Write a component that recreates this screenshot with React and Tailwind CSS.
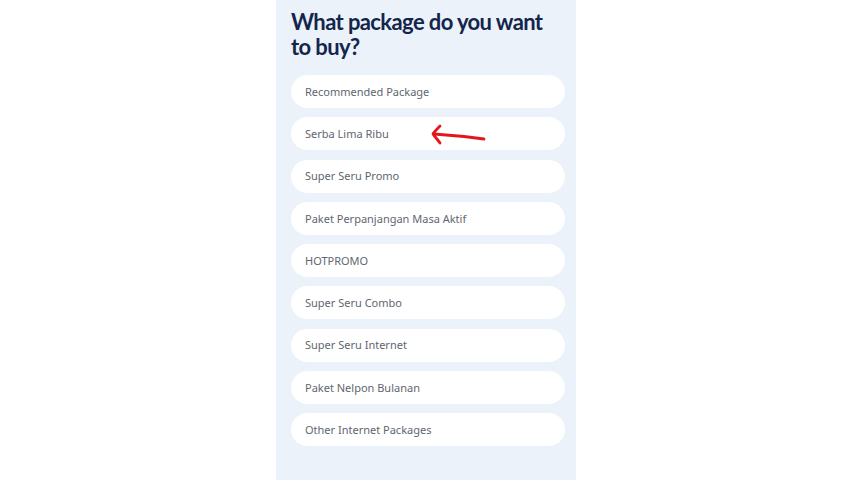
export default function App() {
  const items = [
    "Recommended Package",
    "Serba Lima Ribu",
    "Super Seru Promo",
    "Paket Perpanjangan Masa Aktif",
    "HOTPROMO",
    "Super Seru Combo",
    "Super Seru Internet",
    "Paket Nelpon Bulanan",
    "Other Internet Packages",
  ];
  return (
    <div className="w-[852px] h-[480px] bg-white flex justify-center overflow-hidden">
      <div className="w-[300px] h-[480px] bg-[#ebf2f9] pl-[15px] pr-[11px] pt-[9px]">
        <h1
          className="text-[22px] leading-[25px] font-bold tracking-[-0.6px] text-[#14254d] mb-[16px] whitespace-nowrap"
          style={{ fontFamily: "Lato, 'Noto Sans', sans-serif" }}
        >
          What package do you want
          <br />
          to buy?
        </h1>
        <div className="flex flex-col gap-[9.25px]">
          {items.map((t, i) => (
            <div
              key={t}
              className="relative h-[33px] bg-white rounded-full flex items-center pl-[14px] pt-[1px] text-[11px] text-[#5f6670]"
              style={{ fontFamily: "'Noto Sans', sans-serif" }}
            >
              {t}
              {i === 1 && (
                <svg
                  className="absolute left-[138px] top-[6px]"
                  width="58"
                  height="22"
                  viewBox="0 0 58 22"
                  fill="none"
                >
                  <path
                    d="M5 11 C 20 12, 40 14, 55 16"
                    stroke="#e3161b"
                    strokeWidth="2.8"
                    strokeLinecap="round"
                  />
                  <path
                    d="M11 3 C 8 6, 5 9, 4 11 C 6 14, 9 17, 11 20"
                    stroke="#e3161b"
                    strokeWidth="2.8"
                    strokeLinecap="round"
                    strokeLinejoin="round"
                  />
                </svg>
              )}
            </div>
          ))}
        </div>
      </div>
    </div>
  );
}
